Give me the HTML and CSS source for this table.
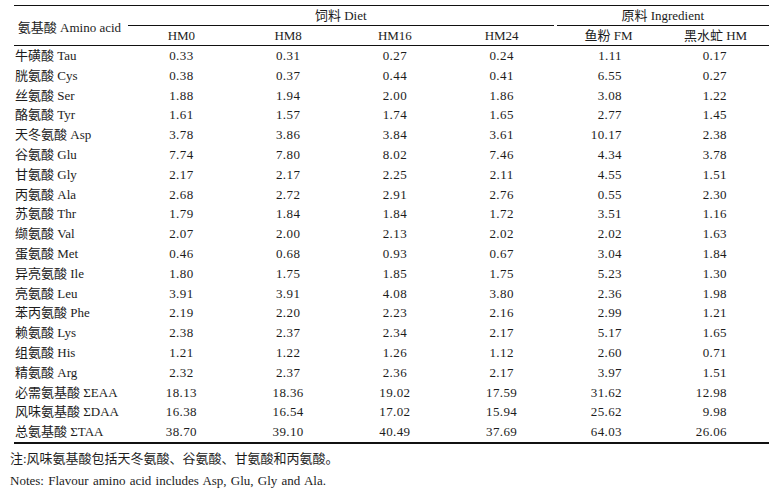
FILE: index.html
```html
<!DOCTYPE html>
<html lang="zh">
<head>
<meta charset="utf-8">
<link rel="stylesheet" href="styles.css">
</head>
<body>
<table class="aa">
  <colgroup>
    <col class="c-name"><col class="c-diet"><col class="c-diet"><col class="c-diet"><col class="c-diet"><col class="c-ing"><col class="c-ing">
  </colgroup>
  <thead>
    <tr class="h1">
      <th rowspan="2" class="name-h">氨基酸 Amino acid</th>
      <th colspan="4" class="grp"><div class="grp-in grp-diet">饲料 Diet</div></th>
      <th colspan="2" class="grp"><div class="grp-in grp-ing">原料 Ingredient</div></th>
    </tr>
    <tr class="h2">
      <th>HM0</th><th>HM8</th><th>HM16</th><th>HM24</th><th>鱼粉 FM</th><th>黑水虻 HM</th>
    </tr>
  </thead>
  <tbody>
    <tr><td>牛磺酸 Tau</td><td>0.33</td><td>0.31</td><td>0.27</td><td>0.24</td><td>1.11</td><td>0.17</td></tr>
    <tr><td>胱氨酸 Cys</td><td>0.38</td><td>0.37</td><td>0.44</td><td>0.41</td><td>6.55</td><td>0.27</td></tr>
    <tr><td>丝氨酸 Ser</td><td>1.88</td><td>1.94</td><td>2.00</td><td>1.86</td><td>3.08</td><td>1.22</td></tr>
    <tr><td>酪氨酸 Tyr</td><td>1.61</td><td>1.57</td><td>1.74</td><td>1.65</td><td>2.77</td><td>1.45</td></tr>
    <tr><td>天冬氨酸 Asp</td><td>3.78</td><td>3.86</td><td>3.84</td><td>3.61</td><td>10.17</td><td>2.38</td></tr>
    <tr><td>谷氨酸 Glu</td><td>7.74</td><td>7.80</td><td>8.02</td><td>7.46</td><td>4.34</td><td>3.78</td></tr>
    <tr><td>甘氨酸 Gly</td><td>2.17</td><td>2.17</td><td>2.25</td><td>2.11</td><td>4.55</td><td>1.51</td></tr>
    <tr><td>丙氨酸 Ala</td><td>2.68</td><td>2.72</td><td>2.91</td><td>2.76</td><td>0.55</td><td>2.30</td></tr>
    <tr><td>苏氨酸 Thr</td><td>1.79</td><td>1.84</td><td>1.84</td><td>1.72</td><td>3.51</td><td>1.16</td></tr>
    <tr><td>缬氨酸 Val</td><td>2.07</td><td>2.00</td><td>2.13</td><td>2.02</td><td>2.02</td><td>1.63</td></tr>
    <tr><td>蛋氨酸 Met</td><td>0.46</td><td>0.68</td><td>0.93</td><td>0.67</td><td>3.04</td><td>1.84</td></tr>
    <tr><td>异亮氨酸 Ile</td><td>1.80</td><td>1.75</td><td>1.85</td><td>1.75</td><td>5.23</td><td>1.30</td></tr>
    <tr><td>亮氨酸 Leu</td><td>3.91</td><td>3.91</td><td>4.08</td><td>3.80</td><td>2.36</td><td>1.98</td></tr>
    <tr><td>苯丙氨酸 Phe</td><td>2.19</td><td>2.20</td><td>2.23</td><td>2.16</td><td>2.99</td><td>1.21</td></tr>
    <tr><td>赖氨酸 Lys</td><td>2.38</td><td>2.37</td><td>2.34</td><td>2.17</td><td>5.17</td><td>1.65</td></tr>
    <tr><td>组氨酸 His</td><td>1.21</td><td>1.22</td><td>1.26</td><td>1.12</td><td>2.60</td><td>0.71</td></tr>
    <tr><td>精氨酸 Arg</td><td>2.32</td><td>2.37</td><td>2.36</td><td>2.17</td><td>3.97</td><td>1.51</td></tr>
    <tr><td>必需氨基酸 ΣEAA</td><td>18.13</td><td>18.36</td><td>19.02</td><td>17.59</td><td>31.62</td><td>12.98</td></tr>
    <tr><td>风味氨基酸 ΣDAA</td><td>16.38</td><td>16.54</td><td>17.02</td><td>15.94</td><td>25.62</td><td>9.98</td></tr>
    <tr><td>总氨基酸 ΣTAA</td><td>38.70</td><td>39.10</td><td>40.49</td><td>37.69</td><td>64.03</td><td>26.06</td></tr>
  </tbody>
</table>
<div class="notes">
  <p class="note-zh">注:风味氨基酸包括天冬氨酸、谷氨酸、甘氨酸和丙氨酸。</p>
  <p class="note-en">Notes: Flavour amino acid includes Asp, Glu, Gly and Ala.</p>
</div>
</body>
</html>
```
FILE: styles.css
```css
html, body {
  margin: 0;
  padding: 0;
  background: #ffffff;
}
body {
  font-family: "Liberation Serif", "Noto Sans CJK SC", serif;
  font-size: 13px;
  color: #1c1c1c;
}
.aa {
  border-collapse: separate;
  border-spacing: 0;
  table-layout: fixed;
  width: 755px;
  margin: 5px 0 0 14px;
  border-top: 1px solid #111;
  border-bottom: 2px solid #111;
}
.c-name { width: 114px; }
.c-diet { width: 106.75px; }
.c-ing { width: 107px; }
.aa th {
  font-weight: normal;
  padding: 0;
  text-align: center;
  vertical-align: middle;
  line-height: 19px;
  white-space: nowrap;
}
.h1 th { height: 20px; }
.aa th.name-h {
  vertical-align: bottom;
  padding: 0 3px 8px 0;
  border-bottom: 1px solid #111;
}
.grp { vertical-align: bottom; }
.grp-in {
  height: 19px;
  line-height: 19px;
  border-bottom: 1px solid #111;
}
.grp-diet { margin-right: 1.5px; }
.grp-ing { margin-left: 1.5px; }
.h2 th {
  height: 19px;
  border-bottom: 1px solid #111;
}
.aa td {
  height: 19.8px;
  padding: 0;
  line-height: 19.8px;
  text-align: center;
  white-space: nowrap;
  letter-spacing: 0.4px;
}
.aa td:first-child {
  text-align: left;
  padding-left: 1px;
  letter-spacing: 0;
}
.aa td:nth-child(6) {
  text-align: right;
  padding-right: 40px;
}
.aa td:nth-child(7) {
  text-align: right;
  padding-right: 42px;
}
.notes {
  margin: 4px 0 0 10px;
}
.notes p {
  margin: 0;
  line-height: 22px;
  white-space: nowrap;
}
.note-en {
  word-spacing: 1px;
}
```
